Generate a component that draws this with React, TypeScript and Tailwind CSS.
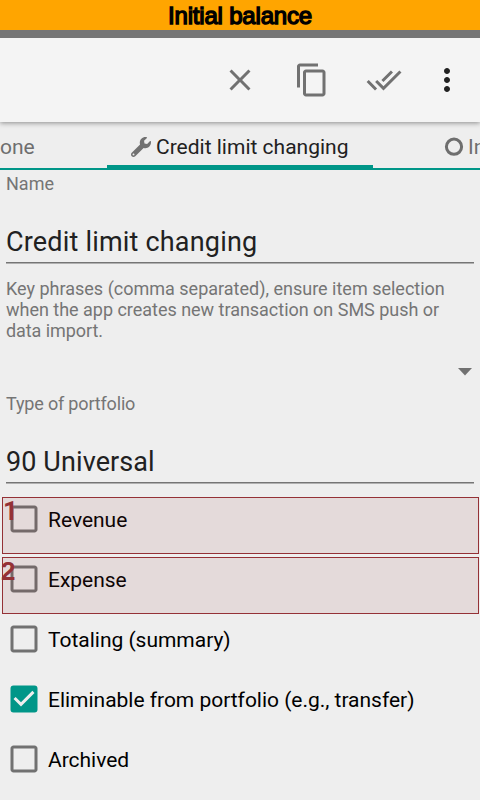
import { FaWrench } from "react-icons/fa";
import { MdClose, MdContentCopy, MdDoneAll, MdMoreVert, MdCheckBox, MdCheckBoxOutlineBlank } from "react-icons/md";

type Option = { label: string; checked?: boolean; mark?: string };

const options: Option[] = [
  { label: "Revenue", mark: "1" },
  { label: "Expense", mark: "2" },
  { label: "Totaling (summary)" },
  { label: "Eliminable from portfolio (e.g., transfer)", checked: true },
  { label: "Archived" },
];

function OptionRow({ label, checked, mark }: Option) {
  return (
    <div className="relative flex h-[60px] items-center pl-[6px]">
      {checked ? (
        <MdCheckBox className="size-9 text-[#009688]" />
      ) : (
        <MdCheckBoxOutlineBlank className="size-9 text-[#717171]" />
      )}
      <span className="ml-[6px] mt-[2px] text-[21px] leading-[25px] tracking-[-0.02px] text-black">{label}</span>
      {mark && (
        <div className="absolute top-[8px] right-[1px] left-[2px] h-[57px] border border-[#943136] bg-[#943130]/10">
          <span
            className={`absolute -top-[1px] leading-[28px] font-bold text-[#943136] ${
              mark === "1"
                ? "left-0 font-[Roboto,sans-serif] text-[26px]"
                : "-left-[2px] font-['Liberation_Sans',sans-serif] text-[26px]"
            }`}
          >
            {mark}
          </span>
        </div>
      )}
    </div>
  );
}

export default function App() {
  return (
    <div className="flex h-[800px] w-[480px] flex-col overflow-hidden bg-[#eeeeee] font-[Roboto,sans-serif] text-[#212121]">
      <div className="z-20 flex h-[30px] shrink-0 items-center justify-center bg-[#ffa500] pt-px font-['Liberation_Sans',sans-serif] text-[24px] leading-[28px] tracking-[-0.2px] text-black [-webkit-text-stroke:1.4px_black]">
        Initial balance
      </div>
      <div className="z-20 h-2 shrink-0 bg-[#757575]" />
      <header className="z-10 flex h-[84px] shrink-0 items-center justify-end bg-[#f4f4f4] pr-[15px] text-[#717171] shadow-[0_1px_5px_rgba(0,0,0,0.42)]">
        <MdClose className="mr-9 size-9" />
        <MdContentCopy className="mr-9 size-9" />
        <MdDoneAll className="mr-[27px] size-9" />
        <MdMoreVert className="size-9 text-[#212121]" />
      </header>
      <nav className="flex h-12 shrink-0 border-b-2 border-[#009688] text-[21px] leading-[25px]">
        <div className="w-[107px] pt-[13px] text-[#6e6e6e]">one</div>
        <div className="-mb-[2px] flex w-[266px] border-b-[5px] border-[#009688] pt-[13px] pl-[24px]">
          <FaWrench className="mt-[2px] mr-[5px] size-5 shrink-0 text-[#717171]" />
          <span className="whitespace-nowrap">Credit limit changing</span>
        </div>
        <div className="flex w-[107px] overflow-hidden pt-[13px] pl-[71px] text-[#6e6e6e]">
          <svg viewBox="0 0 20 20" className="mt-[2px] mr-[4px] size-5 shrink-0">
            <circle cx="10" cy="9.7" r="7.6" fill="none" stroke="currentColor" strokeWidth="3" />
          </svg>
          <span>In</span>
        </div>
      </nav>
      <main className="flex flex-col">
        <section className="px-[6px] text-[18px] leading-[21px] text-[#757575]">
          <div className="pt-[3px]">Name</div>
          <div className="mt-[32px] h-[38px] bg-[linear-gradient(#757575,#757575),linear-gradient(#b0b0b0,#b0b0b0)] bg-[length:100%_1px,100%_1px] bg-[position:0_36px,0_37px] bg-no-repeat text-[27px] leading-[32px] tracking-[0.19px] text-[#212121]">
            Credit limit changing
          </div>
          <div className="mt-[14px] whitespace-nowrap">
            Key phrases (comma separated), ensure item selection
            <br />
            <span className="tracking-[-0.02px]">when the app creates new transaction on SMS push or</span>
            <br />
            <span className="tracking-[-0.07px]">data import.</span>
          </div>
          <div className="flex h-[52px] items-start justify-end pt-[27px] pr-[2px]">
            <svg viewBox="0 0 14 8" className="h-2 w-[14px]">
              <path d="M0 0h14L7 7.5z" fill="#717171" />
            </svg>
          </div>
          <div className="tracking-[-0.17px]">Type of portfolio</div>
          <div className="mt-[32px] h-[38px] bg-[linear-gradient(#757575,#757575),linear-gradient(#b0b0b0,#b0b0b0)] bg-[length:100%_1px,100%_1px] bg-[position:0_36px,0_37px] bg-no-repeat text-[27px] leading-[32px] tracking-[0.1px] text-[#212121]">
            90 Universal
          </div>
        </section>
        <section className="mt-[5px]">
          {options.map((option) => (
            <OptionRow key={option.label} {...option} />
          ))}
        </section>
      </main>
    </div>
  );
}
